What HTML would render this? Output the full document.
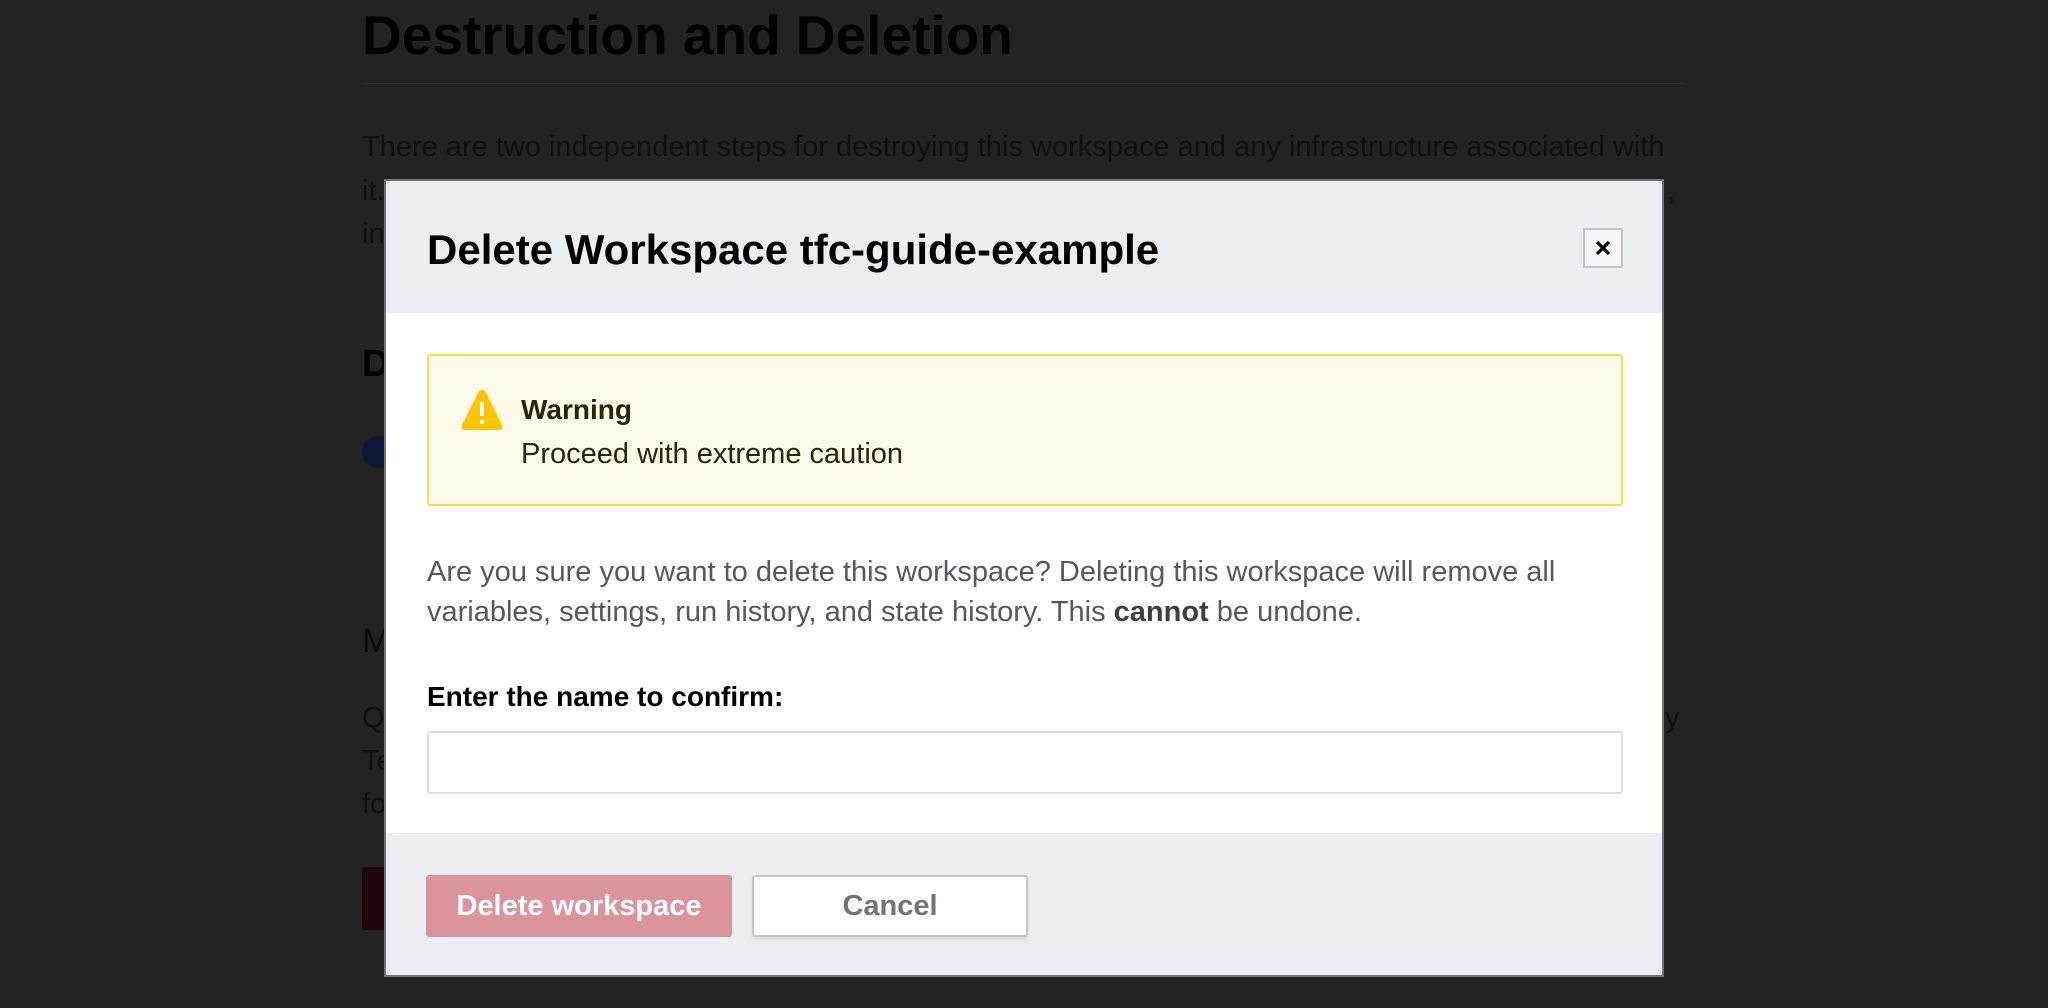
<!DOCTYPE html>
<html><head><meta charset="utf-8"><style>
*{box-sizing:border-box;margin:0;padding:0}
body{width:2048px;height:1008px;background:#232323;font-family:"Liberation Sans",sans-serif;position:relative;overflow:hidden}
.bg{position:absolute;color:#0e0e0e;white-space:nowrap}
.modal{position:absolute;left:384px;top:179px;width:1280px;height:798px;border:2px solid #6e7482;background:#fff}
.hdr{position:absolute;left:0;top:0;right:0;height:132px;background:#ebeef3}
.title{position:absolute;left:41px;top:45px;font-size:42px;font-weight:bold;color:#000}
.close{position:absolute;left:1197px;top:47px;width:40px;height:40px;border:2px solid #c1c6d0;background:#f6f7fa;display:flex;align-items:center;justify-content:center}
.warn{position:absolute;left:41px;top:173px;width:1196px;height:152px;background:#fefaeb;border:2px solid #fdd954;border-radius:3px}
.w1{position:absolute;left:92px;top:38px;font-size:28px;font-weight:bold;color:#2b2405}
.w2{position:absolute;left:92px;top:82px;font-size:29px;color:#2b2405}
.p{position:absolute;left:41px;top:371px;font-size:29px;line-height:40px;color:#535866;width:1220px}
.lbl{position:absolute;left:41px;top:500px;font-size:28px;font-weight:bold;color:#000}
.inp{position:absolute;left:41px;top:550px;width:1196px;height:63px;border:2px solid #dcdfe5;border-radius:3px;background:#fff}
.ftr{position:absolute;left:0;right:0;top:652px;bottom:0;background:#ebeef3}
.b1{position:absolute;left:40px;top:42px;width:306px;height:62px;background:#dc949c;border-radius:3px;color:#fff;font-weight:bold;font-size:29px;display:flex;align-items:center;justify-content:center}
.b2{position:absolute;left:366px;top:42px;width:276px;height:62px;background:#fff;border:2px solid #c1c6d0;border-radius:3px;color:#6f7480;font-weight:bold;font-size:29px;display:flex;align-items:center;justify-content:center;box-shadow:0 3px 3px rgba(0,0,0,.08)}
</style></head><body>
<div class="bg" style="left:362px;top:3px;font-size:55px;font-weight:bold;color:#000">Destruction and Deletion</div>
<div style="position:absolute;left:362px;top:83px;width:1323px;height:1px;background:#2c2c2c"></div>
<div class="bg" style="left:362px;top:131px;font-size:29px;color:#111">There are two independent steps for destroying this workspace and any infrastructure associated with</div>
<div class="bg" style="left:362px;top:175px;font-size:29px;color:#111">it.</div>
<div class="bg" style="left:1667px;top:175px;font-size:29px;color:#111">,</div>
<div class="bg" style="left:362px;top:218px;font-size:29px;color:#111">in</div>
<div class="bg" style="left:362px;top:343px;font-size:38px;font-weight:bold;color:#000">D</div>
<div style="position:absolute;left:362px;top:436px;width:40px;height:32px;border-radius:16px;background:#0b1733"></div>
<div class="bg" style="left:362px;top:622px;font-size:34px;color:#0c0c0c">M</div>
<div class="bg" style="left:362px;top:702px;font-size:29px;color:#111">Q</div>
<div class="bg" style="left:1665px;top:702px;font-size:29px;color:#111">y</div>
<div class="bg" style="left:362px;top:745px;font-size:29px;color:#111">Te</div>
<div class="bg" style="left:362px;top:788px;font-size:29px;color:#111">fo</div>
<div style="position:absolute;left:362px;top:867px;width:40px;height:63px;border-radius:3px;background:#1e0709"></div>
<div class="modal">
 <div class="hdr">
  <div class="title">Delete Workspace tfc-guide-example</div>
  <div class="close"><svg width="16" height="16" viewBox="0 0 16 16"><path d="M2 2L14 14M14 2L2 14" stroke="#000" stroke-width="3.2"/></svg></div>
 </div>
 <div class="warn">
  <svg style="position:absolute;left:31px;top:32px" width="44" height="44" viewBox="0 0 44 44"><path d="M22 2C24 2 25 3 26 5L42 37C43.5 40 42 42 39 42H5C2 42 0.5 40 2 37L18 5C19 3 20 2 22 2Z" fill="#fdc400"/><rect x="20" y="14" width="4" height="14" fill="#fff"/><rect x="20" y="32" width="4" height="4" fill="#fff"/></svg>
  <div class="w1">Warning</div>
  <div class="w2">Proceed with extreme caution</div>
 </div>
 <div class="p">Are you sure you want to delete this workspace? Deleting this workspace will remove all<br>variables, settings, run history, and state history. This <b style="color:#3b3f4a">cannot</b> be undone.</div>
 <div class="lbl">Enter the name to confirm:</div>
 <div class="inp"></div>
 <div class="ftr">
  <div class="b1">Delete workspace</div>
  <div class="b2">Cancel</div>
 </div>
</div>
</body></html>
